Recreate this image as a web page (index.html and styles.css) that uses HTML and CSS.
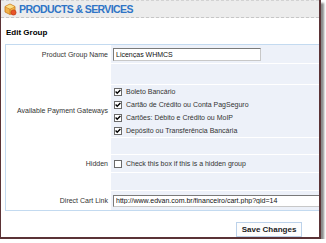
FILE: index.html
```html
<!DOCTYPE html>
<html lang="en">
<head>
  <meta charset="UTF-8" />
  <title>Products &amp; Services - Edit Group</title>
  <link rel="stylesheet" href="styles.css">
</head>
<body>
  <div class="frame">

    <!-- Page header -->
    <div class="header">
      <svg class="header-icon" width="14" height="14" viewBox="0 0 14 14">
        <path d="M2 4.5 L7 2 L12 4.5 L12 10 L7 12.5 L2 10 Z" fill="#f2b24a" stroke="#c9781a" stroke-width="0.8"/>
        <path d="M2 4.5 L7 7 L12 4.5" fill="none" stroke="#c9781a" stroke-width="0.8"/>
        <path d="M7 7 L7 12.5" stroke="#c9781a" stroke-width="0.8"/>
        <path d="M2.4 4.7 L7 2.4 L11.6 4.7 L7 6.8 Z" fill="#fbe08a"/>
        <circle cx="10.5" cy="10.5" r="2.6" fill="#e8552a" stroke="#b63612" stroke-width="0.6"/>
      </svg>
      <span class="header-title">PRODUCTS &amp; SERVICES</span>
    </div>

    <h2 class="section-title">Edit Group</h2>

    <table class="form-table">
      <tr class="row-name">
        <td class="label">Product Group Name</td>
        <td class="field"><input type="text" class="text-input short" value="Licenças WHMCS" /></td>
      </tr>
      <tr class="row-blank-a">
        <td class="label"></td>
        <td class="field"></td>
      </tr>
      <tr class="row-gateways">
        <td class="label">Available Payment Gateways</td>
        <td class="field">
          <div class="check-row"><span class="check on"></span>Boleto Bancário</div>
          <div class="check-row"><span class="check on"></span>Cartão de Crédito ou Conta PagSeguro</div>
          <div class="check-row"><span class="check on"></span>Cartões: Débito e Crédito ou MoIP</div>
          <div class="check-row"><span class="check on"></span>Depósito ou Transferência Bancária</div>
        </td>
      </tr>
      <tr class="row-blank-b">
        <td class="label"></td>
        <td class="field"></td>
      </tr>
      <tr class="row-hidden">
        <td class="label">Hidden</td>
        <td class="field">
          <div class="check-row"><span class="check"></span>Check this box if this is a hidden group</div>
        </td>
      </tr>
      <tr class="row-blank-c">
        <td class="label"></td>
        <td class="field"></td>
      </tr>
      <tr class="row-link">
        <td class="label">Direct Cart Link</td>
        <td class="field"><input type="text" class="text-input long" value="http://www.edvan.com.br/financeiro/cart.php?gid=14" /></td>
      </tr>
    </table>

    <div class="actions">
      <button class="save-btn">Save Changes</button>
    </div>
  </div>
</body>
</html>
```
FILE: styles.css
```css
body {
  margin: 0;
  padding: 0;
  background: #fff;
  font-family: 'Liberation Sans', Arial, sans-serif;
}

/* Screenshot frame with drop shadow */
.frame {
  width: 318px;
  height: 237px;
  border-left: 1px solid #5b3336;
  border-right: 2px solid #5b3336;
  border-bottom: 2px solid #5b3336;
  box-shadow: 3px 3px 2px rgba(60, 60, 60, 0.6);
  background: #fff;
  overflow: hidden;
}

/* Header bar */
.header {
  display: flex;
  align-items: center;
  height: 16px;
  padding: 0 0 0 2px;
  background: #ececec;
  border-top: 1px dashed #d2d2d2;
  border-bottom: 1px dashed #c6c6c6;
}

.header-icon {
  margin-right: 2px;
}

.header-title {
  font-size: 10.5px;
  font-weight: bold;
  color: #2f74c6;
  letter-spacing: -0.6px;
}

.section-title {
  margin: 10px 0 7px 5px;
  font-size: 8px;
  font-weight: bold;
  color: #000;
  line-height: 9px;
}

/* Form table */
.form-table {
  margin-left: 4px;
  width: 340px;
  border: 1px solid #c3daf0;
  border-collapse: separate;
  border-spacing: 0;
  font-size: 7px;
  color: #333;
}

.form-table td {
  padding: 0;
  vertical-align: middle;
}

.form-table .label {
  width: 102px;
  padding-right: 3px;
  text-align: right;
  background: #fff;
}

.form-table .field {
  padding-left: 2px;
  background: #edf1f9;
}

.form-table tr + tr .field {
  border-top: 1px solid #fff;
}

.row-name td { height: 18px; }
.row-blank-a td { height: 20px; }
.row-gateways td { height: 52px; }
.row-blank-b td { height: 16px; }
.row-hidden td { height: 17px; }
.row-blank-c td { height: 17px; }
.row-link td { height: 19px; }

.text-input {
  display: block;
  box-sizing: border-box;
  height: 13px;
  padding: 0 2px;
  border: 1px solid #7a7a7a;
  border-right-color: #c8c8c8;
  border-bottom-color: #c8c8c8;
  background: #fff;
  font-family: 'Liberation Sans', Arial, sans-serif;
  font-size: 7px;
  color: #111;
}

.text-input.short {
  width: 148px;
}

.text-input.long {
  width: 220px;
  height: 12px;
}

/* Checkbox rows */
.check-row {
  display: flex;
  align-items: center;
  height: 13px;
}

.check {
  box-sizing: border-box;
  width: 8px;
  height: 8px;
  margin: 0 4px 0 1px;
  border: 1px solid #6a6a6a;
  background: #fff;
}

.check.on {
  background: #fff url("data:image/svg+xml;utf8,<svg xmlns='http://www.w3.org/2000/svg' width='6' height='6' viewBox='0 0 6 6'><path d='M0.6 2.6 L2.2 4.2 L5.4 1' fill='none' stroke='%23000' stroke-width='1.4'/></svg>") no-repeat center;
}

/* Save button */
.actions {
  padding: 7px 0 0 235px;
}

.save-btn {
  box-sizing: border-box;
  width: 66px;
  height: 15px;
  padding: 0;
  border: 1px solid #bcd2ea;
  background: #fdfdfd;
  font-family: 'Liberation Sans', Arial, sans-serif;
  font-size: 8px;
  font-weight: bold;
  color: #222;
}
```
